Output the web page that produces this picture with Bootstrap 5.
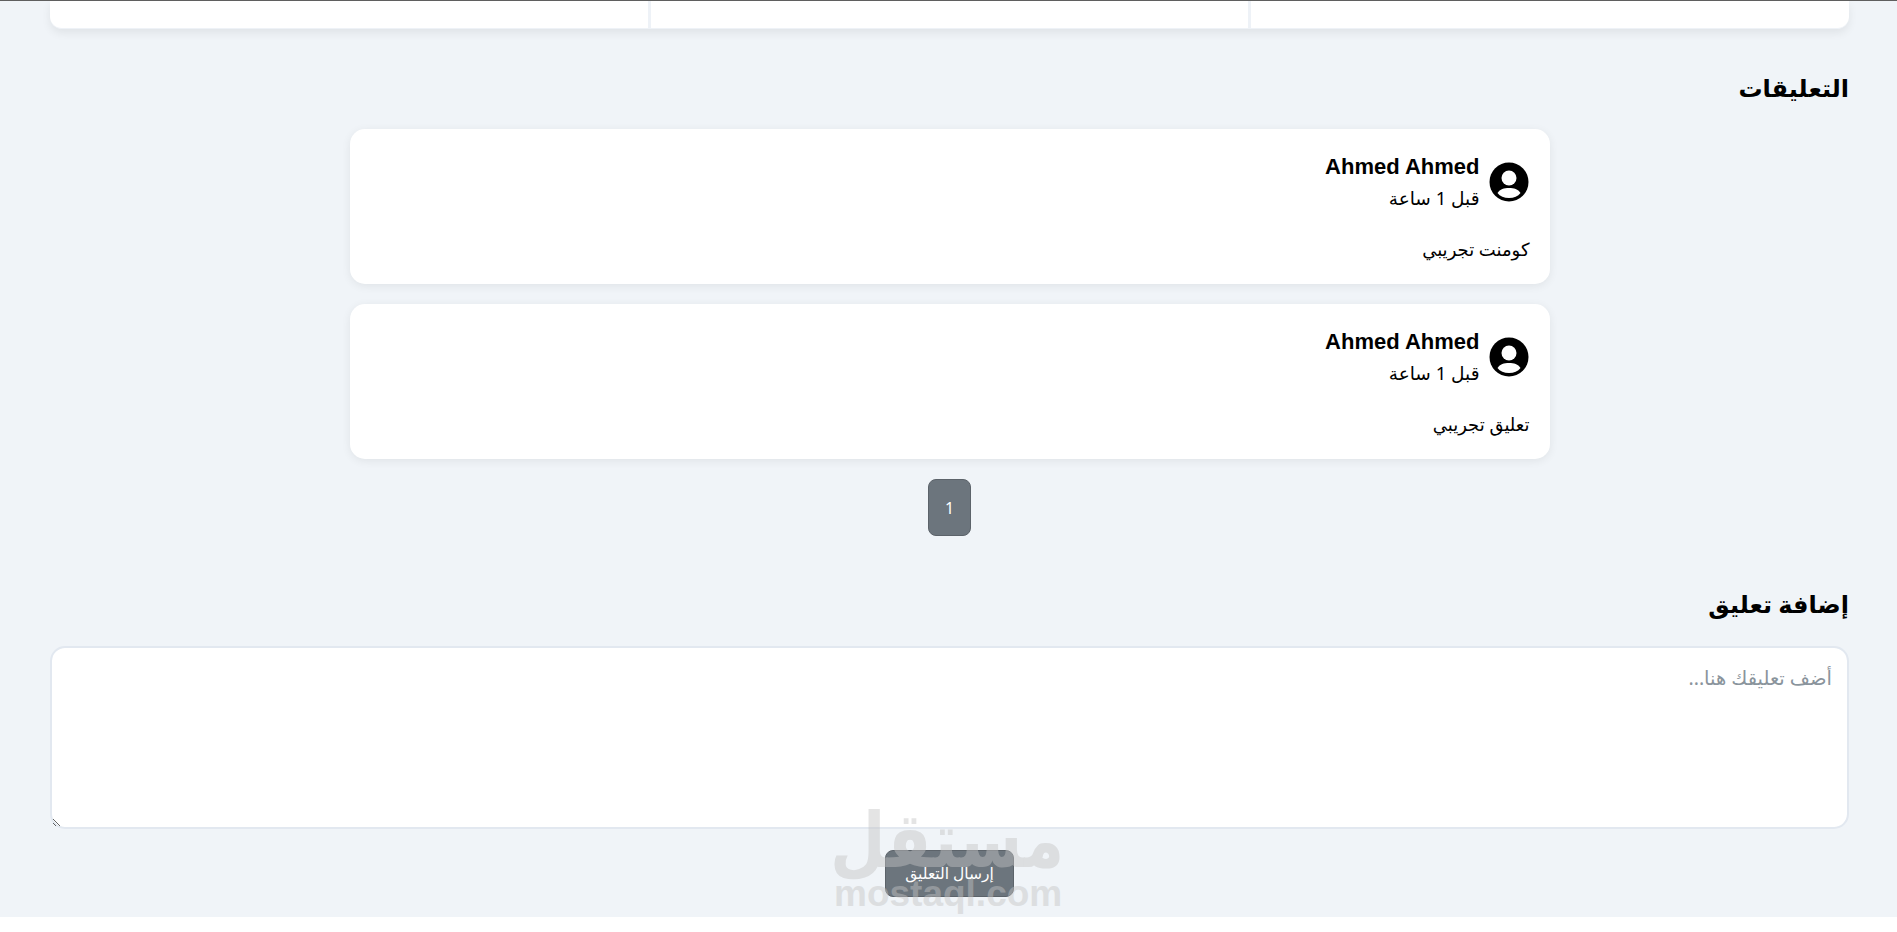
<!DOCTYPE html>
<html lang="ar" dir="rtl">
<head>
    <meta charset="UTF-8">
    <title>التعليقات</title>
    <link href="https://cdn.jsdelivr.net/npm/bootstrap@5.3.0/dist/css/bootstrap.min.css" rel="stylesheet">
    <style>
        html {
            height: 932px;
            overflow: hidden;
            background: #fff;
        }

        body {
            height: 917px;
            overflow: hidden;
            background: #f0f4f8;
            color: #000;
            font-family: "Noto Sans", "DejaVu Sans", sans-serif;
            border-top: 1px solid #5f5f5f;
            position: relative;
        }

        .page-wrap {
            padding: 0 48px 0 50px;
        }

        .stats-strip {
            height: 28px;
            background: #fff;
            border-radius: 0 0 12px 12px;
            border-bottom: 1px solid #eef2f7;
            box-shadow: 0 4px 10px rgba(0, 0, 0, .07);
        }

        .stats-strip > div {
            flex: 1;
            border-left: 3px solid #eef2f7;
        }

        .stats-strip > div:last-child {
            border-left: 0;
        }

        .section-title {
            font-size: 24px;
            font-weight: 700;
            line-height: 38px;
            margin: 0;
        }

        .stats-gap {
            margin-top: 40px;
        }

        .comments {
            margin-top: 22px;
            gap: 20px;
        }

        .add-title {
            margin-top: 49px;
        }

        .comment-box {
            width: 1200px;
            height: 155px;
            background: #fff;
            border-radius: 15px;
            padding: 21px 20px 20px;
            box-shadow: 0 2px 10px rgba(0, 0, 0, .07);
        }

        .comment-head {
            gap: 9px;
        }

        .comment-head svg {
            margin-right: 1px;
            margin-top: 2px;
        }

        .comment-name {
            font-family: "Liberation Sans", sans-serif;
            font-weight: 700;
            font-size: 22px;
            line-height: 33px;
        }

        .comment-time {
            font-size: 18.5px;
            line-height: 29px;
        }

        .comment-text {
            font-size: 18px;
            line-height: 27px;
            margin-top: 24px;
        }

        .page-btn {
            width: 43px;
            height: 57px;
            background: #6c757d;
            border: 1px solid #5c636a;
            border-radius: 8px;
            color: #fff;
            font-size: 16px;
        }

        .comment-input {
            height: 183px;
            margin-top: 23px;
            border: 2px solid #e2e8f0;
            border-radius: 15px;
            padding: 15px;
            font-size: 19.5px;
            resize: vertical;
        }

        .comment-input::placeholder {
            color: #8a949c;
        }

        .send-row {
            margin-top: 21px;
        }

        .send-btn {
            width: 129px;
            height: 47px;
            background: #6c757d;
            border: 1px solid #5c636a;
            border-radius: 8px;
            color: #fff;
            font-size: 15.5px;
            padding: 0;
        }

        .site-mark {
            position: absolute;
            left: 834px;
            top: 797px;
            width: 228px;
            text-align: center;
            color: #c4c4c4;
            opacity: .45;
            pointer-events: none;
        }

        .site-mark-ar {
            font-size: 64px;
            font-weight: 700;
            line-height: 80px;
            white-space: nowrap;
            transform: translateX(2px) scaleY(1.2);
        }

        .site-mark-en {
            font-family: "Liberation Sans", sans-serif;
            font-size: 37px;
            font-weight: 700;
            line-height: 40px;
            margin-top: -4px;
        }
    </style>
</head>
<body>
    <div class="page-wrap">
        <div class="stats-strip d-flex">
            <div></div>
            <div></div>
            <div></div>
        </div>

        <h2 class="section-title stats-gap">التعليقات</h2>

        <div class="d-flex flex-column align-items-center comments">
            <div class="comment-box">
                <div class="d-flex align-items-center comment-head">
                    <svg width="40" height="40" viewBox="0 0 40 40"><circle cx="20" cy="20" r="19.5" fill="#000"/><circle cx="20" cy="16" r="7.5" fill="#fff"/><path d="M8.5 31C11 27 15 26 20 26s9 1 11.5 5C29 34.5 25 36 20 36s-9-1.500-11.500-5z" fill="#fff"/></svg>
                    <div>
                        <div class="comment-name" dir="ltr">Ahmed Ahmed</div>
                        <div class="comment-time">قبل 1 ساعة</div>
                    </div>
                </div>
                <p class="comment-text mb-0">كومنت تجريبي</p>
            </div>
            <div class="comment-box">
                <div class="d-flex align-items-center comment-head">
                    <svg width="40" height="40" viewBox="0 0 40 40"><circle cx="20" cy="20" r="19.5" fill="#000"/><circle cx="20" cy="16" r="7.5" fill="#fff"/><path d="M8.5 31C11 27 15 26 20 26s9 1 11.5 5C29 34.5 25 36 20 36s-9-1.500-11.500-5z" fill="#fff"/></svg>
                    <div>
                        <div class="comment-name" dir="ltr">Ahmed Ahmed</div>
                        <div class="comment-time">قبل 1 ساعة</div>
                    </div>
                </div>
                <p class="comment-text mb-0">تعليق تجريبي</p>
            </div>
            <button type="button" class="btn page-btn p-0">1</button>
        </div>

        <h2 class="section-title add-title">إضافة تعليق</h2>
        <textarea class="form-control comment-input" placeholder="أضف تعليقك هنا..."></textarea>
        <div class="text-center send-row">
            <button type="button" class="btn send-btn">إرسال التعليق</button>
        </div>
    </div>

    <div class="site-mark">
        <div class="site-mark-ar">مستقل</div>
        <div class="site-mark-en" dir="ltr">mostaql.com</div>
    </div>
</body>
</html>
